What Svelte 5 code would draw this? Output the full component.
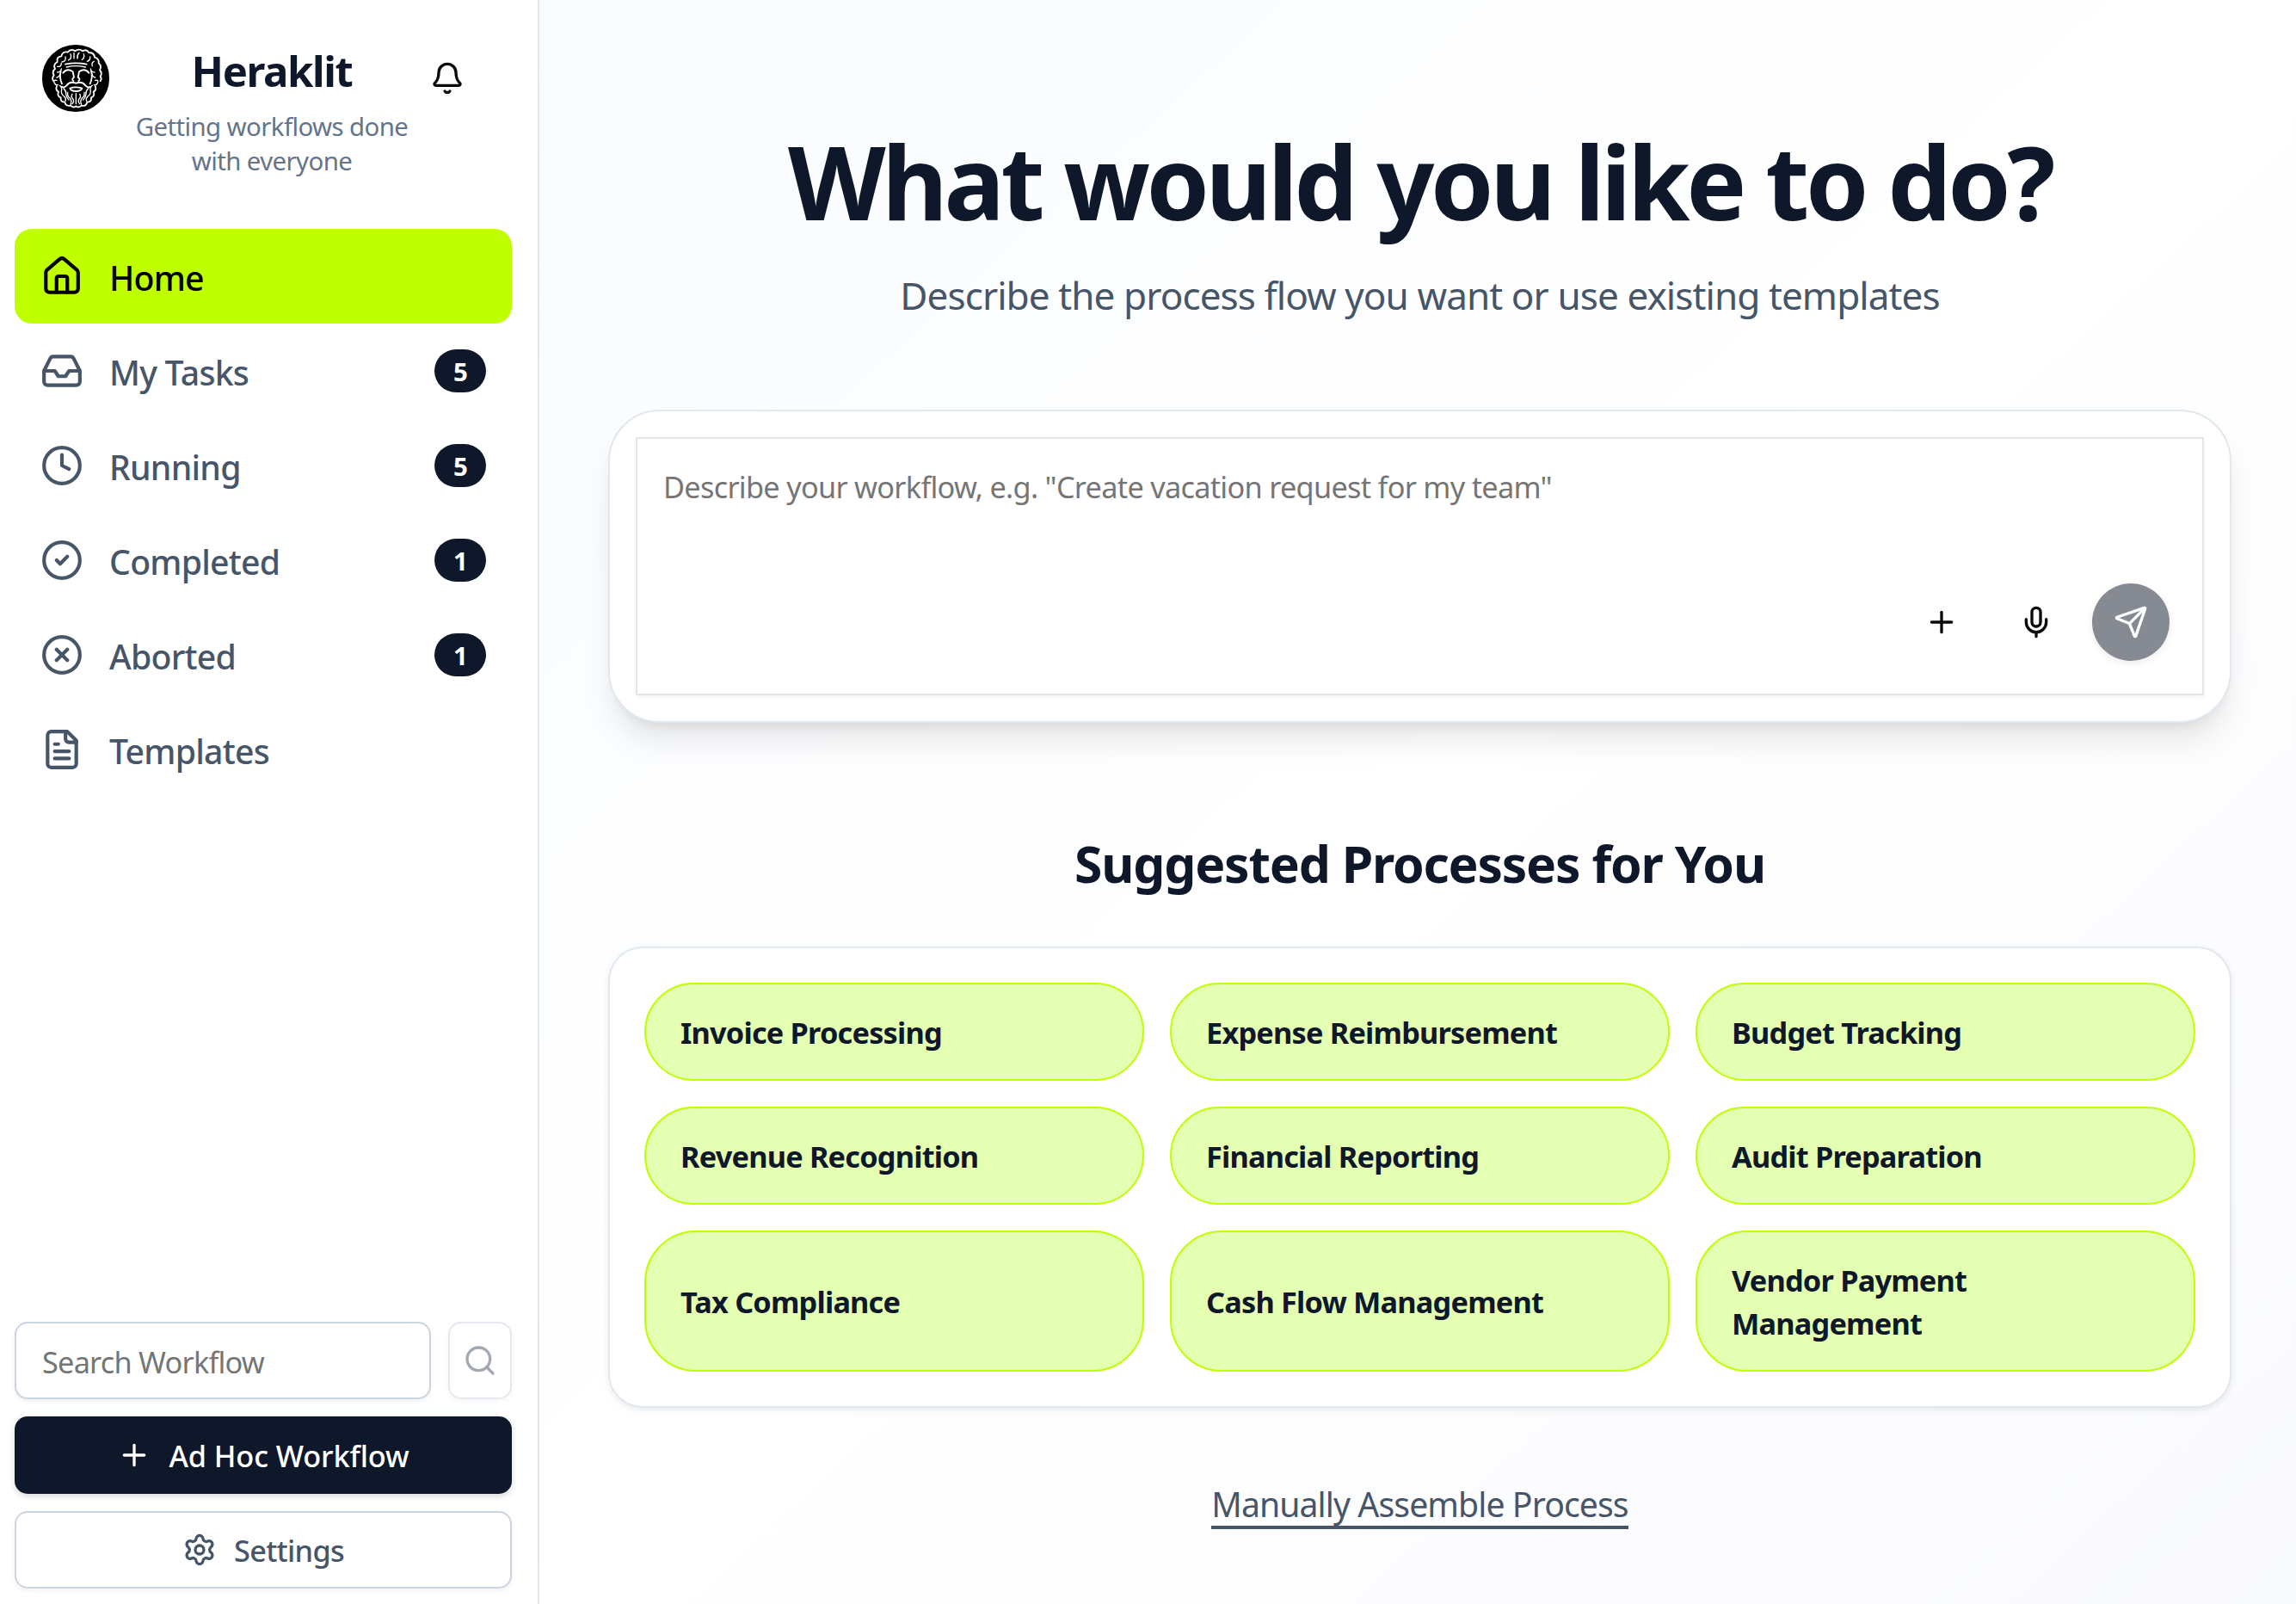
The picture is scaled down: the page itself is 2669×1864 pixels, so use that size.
<script>
  let query = $state("");
  let prompt = $state("");

  const navItems = [
    { label: "Home", icon: "home", active: true },
    { label: "My Tasks", icon: "inbox", count: 5 },
    { label: "Running", icon: "clock", count: 5 },
    { label: "Completed", icon: "check", count: 1 },
    { label: "Aborted", icon: "x", count: 1 },
    { label: "Templates", icon: "file" },
  ];

  const processes = [
    "Invoice Processing",
    "Expense Reimbursement",
    "Budget Tracking",
    "Revenue Recognition",
    "Financial Reporting",
    "Audit Preparation",
    "Tax Compliance",
    "Cash Flow Management",
    "Vendor Payment Management",
  ];

  const icons = {
    home: [
      "M15 21v-8a1 1 0 0 0-1-1h-4a1 1 0 0 0-1 1v8",
      "M3 10a2 2 0 0 1 .709-1.528l7-5.999a2 2 0 0 1 2.582 0l7 5.999A2 2 0 0 1 21 10v9a2 2 0 0 1-2 2H5a2 2 0 0 1-2-2z",
    ],
    inbox: [
      "M22 12h-6l-2 3h-4l-2-3H2",
      "M5.45 5.11 2 12v6a2 2 0 0 0 2 2h16a2 2 0 0 0 2-2v-6l-3.45-6.89A2 2 0 0 0 16.76 4H7.24a2 2 0 0 0-1.79 1.11z",
    ],
    clock: ["M12 2a10 10 0 1 0 0 20a10 10 0 1 0 0-20", "M12 6v6l4 2"],
    check: ["M12 2a10 10 0 1 0 0 20a10 10 0 1 0 0-20", "m9 12 2 2 4-4"],
    x: [
      "M12 2a10 10 0 1 0 0 20a10 10 0 1 0 0-20",
      "m15 9-6 6",
      "m9 9 6 6",
    ],
    file: [
      "M15 2H6a2 2 0 0 0-2 2v16a2 2 0 0 0 2 2h12a2 2 0 0 0 2-2V7Z",
      "M14 2v4a2 2 0 0 0 2 2h4",
      "M10 9H8",
      "M16 13H8",
      "M16 17H8",
    ],
    bell: [
      "M10.268 21a2 2 0 0 0 3.464 0",
      "M3.262 15.326A1 1 0 0 0 4 17h16a1 1 0 0 0 .74-1.673C19.41 13.956 18 12.499 18 8A6 6 0 0 0 6 8c0 4.499-1.411 5.956-2.738 7.326",
    ],
    search: ["M11 3a8 8 0 1 0 0 16a8 8 0 1 0 0-16", "m21 21-4.34-4.34"],
    plus: ["M5 12h14", "M12 5v14"],
    mic: [
      "M12 19v3",
      "M19 10v2a7 7 0 0 1-14 0v-2",
      "M12 2a3 3 0 0 1 3 3v7a3 3 0 0 1-6 0V5a3 3 0 0 1 3-3z",
    ],
    send: [
      "M14.536 21.686a.5.5 0 0 0 .937-.024l6.5-19a.496.496 0 0 0-.635-.635l-19 6.5a.5.5 0 0 0-.024.937l7.93 3.18a2 2 0 0 1 1.112 1.11z",
      "m21.854 2.147-10.94 10.939",
    ],
    settings: [
      "M9.671 4.136a2.34 2.34 0 0 1 4.659 0 2.34 2.34 0 0 0 3.319 1.915 2.34 2.34 0 0 1 2.33 4.033 2.34 2.34 0 0 0 0 3.831 2.34 2.34 0 0 1-2.33 4.033 2.34 2.34 0 0 0-3.319 1.915 2.34 2.34 0 0 1-4.659 0 2.34 2.34 0 0 0-3.32-1.915 2.34 2.34 0 0 1-2.33-4.033 2.34 2.34 0 0 0 0-3.831A2.34 2.34 0 0 1 6.35 6.051a2.34 2.34 0 0 0 3.319-1.915",
      "M12 9a3 3 0 1 0 0 6a3 3 0 1 0 0-6",
    ],
  };
</script>

{#snippet icon(name)}
  <svg class="icon" viewBox="0 0 24 24">
    {#each icons[name] as d}
      <path {d} />
    {/each}
  </svg>
{/snippet}

<div class="app">
  <aside>
    <header>
      <svg class="logo" viewBox="24 33 240 240">
        <circle cx="144" cy="153" r="120" fill="#000" />
        <!-- hair -->
        <path
          d="M66 162q-6-10 2-20q-8-12 4-22q-8-16 8-24q-4-18 14-20q4-18 22-14q12-14 26-4q14-10 26 0q14-8 22 6q18-2 20 16q16 4 14 20q12 10 4 24q10 12 2 22q6 10 0 16"
        />
        <path
          class="fine"
          d="M80 112q14 2 14-12M96 96q16-2 12-18M118 90q14-6 8-22M138 64v20M150 84q-2-12 6-20M166 88q10-6 6-20M184 94q12-4 10-16M202 110q-4-12 6-16M80 132q12 0 14-12M78 150q10-2 12-14M210 132q-12 0-14-12M212 150q-10-2-12-14"
        />
        <!-- brow, eyes and nose -->
        <path d="M108 104q36-8 74 0" />
        <path class="fine" d="M112 114q32-8 66 0" />
        <path
          d="M100 134q14-18 34-4l4 20q-10 6-2 12M190 134q-14-18-34-4l-4 20q10 6 2 12"
        />
        <path d="M92 128q-6 22 4 44M198 128q6 22-4 44" />
        <!-- ears -->
        <path class="fine" d="M78 160q-14-2-8 10q4 8 12 6M212 160q14-2 8 10q-4 8-12 6" />
        <!-- moustache and beard -->
        <path
          d="M144 170q-20-8-32 8q-8 10-16 4M146 170q20-8 32 8q8 10 16 4M124 188q20-8 42 0q-4 10-21 10q-17 0-21-10"
        />
        <path
          d="M78 180q-6 14 6 20q-6 16 8 20q-2 16 14 16q4 16 20 12q10 10 19 2q9 8 19-2q16 4 20-12q16 0 14-16q14-4 8-20q12-6 6-20"
        />
        <path
          class="fine"
          d="M88 178q10 8 6 20q0 12 10 18q8 8 4 16M102 188q10 10 8 20q2 12 10 20M116 202q-2 14 8 20q8 10 2 22M132 208q-6 10 2 16q6 10-2 18M145 206v36M202 178q-10 8-6 20q0 12-10 18q-8 8-4 16M188 188q-10 10-8 20q-2 12-10 20M174 202q2 14-8 20q-8 10-2 22M158 208q6 10-2 16q-6 10 2 18"
        />
      </svg>
      <div class="brand">
        <h1>Heraklit</h1>
        <p>Getting workflows done with everyone</p>
      </div>
      <button class="bell" aria-label="Notifications">
        {@render icon("bell")}
      </button>
    </header>

    <nav>
      {#each navItems as item}
        <a href="#{item.icon}" class:active={item.active}>
          {@render icon(item.icon)}
          <span class="label">{item.label}</span>
          {#if item.count}
            <span class="badge">{item.count}</span>
          {/if}
        </a>
      {/each}
    </nav>

    <footer>
      <div class="search">
        <input placeholder="Search Workflow" bind:value={query} />
        <button disabled={!query} aria-label="Search">
          {@render icon("search")}
        </button>
      </div>
      <button class="adhoc">{@render icon("plus")}Ad Hoc Workflow</button>
      <button class="settings">{@render icon("settings")}Settings</button>
    </footer>
  </aside>

  <main>
    <h2>What would you like to do?</h2>
    <p class="lead">
      Describe the process flow you want or use existing templates
    </p>

    <section class="composer">
      <textarea
        placeholder={'Describe your workflow, e.g. "Create vacation request for my team"'}
        bind:value={prompt}
      ></textarea>
      <div class="actions">
        <button aria-label="Add">{@render icon("plus")}</button>
        <button aria-label="Dictate">{@render icon("mic")}</button>
        <button class="send" disabled={!prompt} aria-label="Send">
          {@render icon("send")}
        </button>
      </div>
    </section>

    <h3>Suggested Processes for You</h3>
    <section class="suggestions">
      {#each processes as name}
        <button>{name}</button>
      {/each}
    </section>

    <a class="manual" href="#assemble">Manually Assemble Process</a>
  </main>
</div>

<style>
  :global(body) {
    margin: 0;
    overflow: hidden;
  }
  .app {
    display: flex;
    height: 1864px;
    background: #fff;
    color: #0f172a;
    font-family: "Noto Sans", "Open Sans", sans-serif;
  }
  .app * {
    box-sizing: border-box;
  }
  h1,
  h2,
  h3,
  p {
    margin: 0;
  }
  button,
  input,
  textarea {
    margin: 0;
    padding: 0;
    border: 0;
    background: none;
    color: inherit;
    font: inherit;
    letter-spacing: inherit;
  }
  a {
    color: inherit;
    text-decoration: none;
  }
  .icon {
    flex: none;
    display: block;
    width: 40px;
    height: 40px;
    fill: none;
    stroke: currentColor;
    stroke-width: 2;
    stroke-linecap: round;
    stroke-linejoin: round;
  }

  aside {
    flex: none;
    display: flex;
    flex-direction: column;
    width: 627px;
    border-right: 2px solid #e2e8f0;
  }
  header {
    display: flex;
    align-items: flex-start;
    height: 266px;
    padding: 51px 0 0 48px;
  }
  .logo {
    flex: none;
    width: 80px;
    height: 80px;
    fill: none;
    stroke: #fff;
    stroke-width: 5.5;
    stroke-linecap: round;
    stroke-linejoin: round;
  }
  .logo .fine {
    stroke-width: 4;
  }
  .brand {
    width: 330px;
    margin: 6px 19px 0 23px;
    text-align: center;
  }
  h1 {
    font-size: 49px;
    line-height: 50px;
    letter-spacing: -1.37px;
  }
  .brand p {
    margin-top: 20px;
    color: #64748b;
    font-size: 29.4px;
    line-height: 40px;
    letter-spacing: -0.6px;
  }
  .bell {
    margin-top: 20px;
    color: #0a0a0a;
  }

  nav {
    flex: 1;
    padding: 0 30px 0 17px;
  }
  nav a {
    display: flex;
    align-items: center;
    gap: 30px;
    height: 110px;
    padding: 0 30px;
    border-radius: 20px;
    color: #475569;
    font-size: 39.2px;
    font-weight: 530;
    letter-spacing: -0.75px;
  }
  nav a.active {
    background: #bfff00;
    color: #000;
  }
  nav .icon {
    width: 50px;
    height: 50px;
  }
  .label {
    flex: 1;
    padding-top: 2px;
  }
  .badge {
    width: 60px;
    height: 50px;
    padding-top: 1px;
    border-radius: 25px;
    background: #0f172a;
    color: #fff;
    font-size: 29.4px;
    font-weight: 700;
    line-height: 50px;
    text-align: center;
  }

  footer {
    display: flex;
    flex-direction: column;
    gap: 20px;
    padding: 0 30px 18px 17px;
    font-size: 34.3px;
  }
  .search {
    display: flex;
    gap: 20px;
  }
  .search input {
    flex: 1;
    min-width: 0;
    height: 90px;
    padding: 2px 30px 0;
    border: 2px solid #cbd5e1;
    border-radius: 15px;
    background: #fff;
    letter-spacing: -0.77px;
    box-shadow: 0 2.5px 5px rgba(0, 0, 0, 0.05);
  }
  input::placeholder,
  textarea::placeholder {
    color: #757575;
    opacity: 1;
  }
  .search button {
    display: flex;
    align-items: center;
    justify-content: center;
    width: 74px;
    border: 2px solid #cbd5e1;
    border-radius: 15px;
    color: #475569;
    box-shadow: 0 2.5px 5px rgba(0, 0, 0, 0.05);
  }
  .search button:disabled {
    opacity: 0.5;
  }
  .adhoc,
  .settings {
    display: flex;
    align-items: center;
    justify-content: center;
    gap: 20px;
    height: 90px;
    border-radius: 15px;
    font-weight: 530;
  }
  .adhoc {
    background: #0f172a;
    color: #fff;
    letter-spacing: -0.1px;
    box-shadow: 0 2.5px 7.5px rgba(0, 0, 0, 0.15);
  }
  .settings {
    border: 2px solid #cbd5e1;
    color: #475569;
    letter-spacing: -0.7px;
    box-shadow: 0 2.5px 5px rgba(0, 0, 0, 0.05);
  }

  main {
    flex: 1;
    display: flex;
    flex-direction: column;
    align-items: center;
    padding: 150px 75px 0 80px;
    background: linear-gradient(to bottom right, #f9fbfe, #fff, #f9fafd);
  }
  h2 {
    font-size: 117.6px;
    line-height: 120px;
    letter-spacing: -4.4px;
  }
  .lead {
    margin-top: 38px;
    color: #475569;
    font-size: 44.1px;
    line-height: 70px;
    letter-spacing: -0.93px;
  }
  .composer {
    position: relative;
    width: 100%;
    height: 364px;
    margin-top: 98px;
    padding: 30px;
    border: 2px solid #e2e8f0;
    border-radius: 60px;
    background: #fff;
    box-shadow:
      0 25px 37.5px -7.5px rgba(0, 0, 0, 0.1),
      0 10px 15px -10px rgba(0, 0, 0, 0.1);
  }
  textarea {
    display: block;
    width: 100%;
    height: 300px;
    padding: 31px 30px;
    border: 2px solid #e5e5e5;
    resize: none;
    font-size: 34.3px;
    line-height: 50px;
    letter-spacing: -0.72px;
    box-shadow: 0 2.5px 5px rgba(0, 0, 0, 0.05);
  }
  .actions {
    position: absolute;
    right: 70px;
    bottom: 70px;
    display: flex;
    gap: 20px;
  }
  .actions button {
    display: flex;
    align-items: center;
    justify-content: center;
    width: 90px;
    height: 90px;
    border-radius: 50%;
    color: #0a0a0a;
  }
  .actions .send {
    background: #0f172a;
    color: #fff;
    box-shadow: 0 2.5px 7.5px rgba(0, 0, 0, 0.15);
  }
  .send:disabled {
    opacity: 0.5;
  }

  h3 {
    margin-top: 123px;
    font-size: 58.8px;
    line-height: 80px;
    letter-spacing: -1.2px;
  }
  .suggestions {
    display: grid;
    grid-template-columns: repeat(3, 1fr);
    gap: 30px;
    width: 100%;
    margin-top: 57px;
    padding: 40px;
    border: 2px solid #e2e8f0;
    border-radius: 40px;
    background: #fff;
    box-shadow: 0 2.5px 7.5px rgba(0, 0, 0, 0.08);
  }
  .suggestions button {
    padding: 31px 40px 29px;
    border: 2px solid #bfff00;
    border-radius: 60px;
    background: #e5ffb2;
    font-size: 34.3px;
    font-weight: 700;
    line-height: 50px;
    letter-spacing: -0.8px;
    text-align: left;
  }
  .manual {
    margin-top: 87px;
    border-bottom: 4px solid #475569;
    color: #475569;
    font-size: 39.2px;
    line-height: 50px;
    letter-spacing: -0.92px;
  }
</style>
